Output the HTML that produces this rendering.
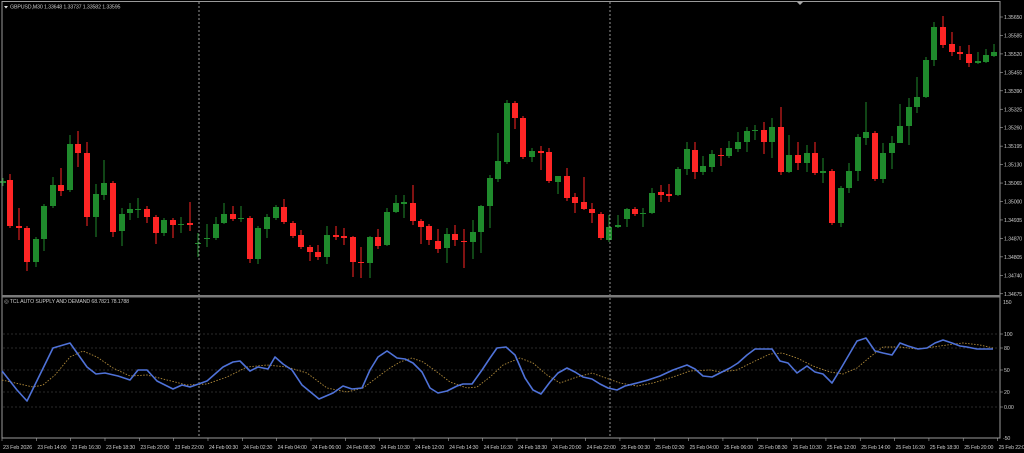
<!DOCTYPE html>
<html><head><meta charset="utf-8"><style>
html,body{margin:0;padding:0;background:#000;width:1024px;height:453px;overflow:hidden}
svg{display:block}
text{font-family:"Liberation Sans",sans-serif;font-size:5.3px;fill:#c8c8c8;letter-spacing:-0.15px}
</style></head><body>
<svg id="s" width="1024" height="453" xmlns="http://www.w3.org/2000/svg">
<rect width="1024" height="453" fill="#000"/>
<g id="grid"></g>
<g id="c"></g>
<line x1="199" y1="2" x2="199" y2="438" stroke="#bbb" stroke-width="0.8" stroke-dasharray="2,2"/>
<line x1="610" y1="2" x2="610" y2="438" stroke="#bbb" stroke-width="0.8" stroke-dasharray="2,2"/>
<rect x="2" y="1.5" width="998" height="436.5" fill="none" stroke="#9a9a9a" stroke-width="1"/>
<rect x="2" y="295" width="998" height="2.5" fill="#7a7a7a"/>
<polygon points="797,2 803,2 800,5" fill="#aaa"/>
<polygon points="4,6 8,6 6,8.5" fill="#ddd"/>
<text x="10" y="8.5">GBPUSD,M30  1.33648 1.33737 1.33582 1.33595</text>
<text x="4" y="303">◎ TCL AUTO SUPPLY AND DEMAND 68.7821 78.1788</text>
<polyline id="o" fill="none" stroke="#b08a3a" stroke-width="0.9" stroke-dasharray="1.5,1.5"/>
<polyline id="b" fill="none" stroke="#4f72d8" stroke-width="1.6" stroke-linejoin="round"/>
<g id="ax"></g>
</svg>
<script>
var NS="http://www.w3.org/2000/svg";
function el(p,t,a,txt){var e=document.createElementNS(NS,t);for(var k in a)e.setAttribute(k,a[k]);if(txt!=null)e.textContent=txt;document.getElementById(p).appendChild(e);return e;}
[[334,"100"],[348,"80"],[370,"50"],[392,"20"],[407,"0.00"]].forEach(function(g){
el("grid","line",{x1:3,y1:g[0],x2:999,y2:g[0],stroke:"#555","stroke-width":0.6,"stroke-dasharray":"2,2"});
el("ax","line",{x1:1000,y1:g[0],x2:1003,y2:g[0],stroke:"#aaa","stroke-width":0.6});
el("ax","text",{x:1004,y:g[0]+2},g[1]);});
el("ax","text",{x:1003,y:304},"150");el("ax","text",{x:1003,y:440},"-50");
var pl=["1.35650","1.35585","1.35520","1.35455","1.35390","1.35325","1.35260","1.35195","1.35130","1.35065","1.35000","1.34935","1.34870","1.34805","1.34740","1.34675"];
pl.forEach(function(t,i){var y=17+i*18.45;el("ax","line",{x1:1000,y1:y,x2:1003,y2:y,stroke:"#aaa","stroke-width":0.6});el("ax","text",{x:1004,y:y+2},t);});
var tl=["23 Feb 2026","23 Feb 14:00","23 Feb 16:30","23 Feb 18:30","23 Feb 20:00","23 Feb 22:00","24 Feb 00:30","24 Feb 02:30","24 Feb 04:00","24 Feb 06:00","24 Feb 08:30","24 Feb 10:30","24 Feb 12:00","24 Feb 14:30","24 Feb 16:30","24 Feb 18:30","24 Feb 20:00","24 Feb 22:00","25 Feb 00:30","25 Feb 02:30","25 Feb 04:00","25 Feb 06:00","25 Feb 08:30","25 Feb 10:30","25 Feb 12:00","25 Feb 14:00","25 Feb 16:30","25 Feb 18:30","25 Feb 20:00","25 Feb 22:00"];
tl.forEach(function(t,i){var x=2+i*34.33;el("ax","line",{x1:x,y1:438,x2:x,y2:441,stroke:"#aaa","stroke-width":0.6});el("ax","text",{x:x+1,y:449,textLength:29,lengthAdjust:"spacingAndGlyphs"},t);});
var C=[[3,181,183,178,186,'g'],[10,180,226,174,228,'r'],[19,226,228,208,240,'r'],[27,228,262,226,271,'r'],[36,239,262,237,267,'g'],[44,206,239,204,251,'g'],[53,185,206,177,208,'g'],[61,185,191,168,196,'r'],[70,144,190,135,192,'g'],[78,144,153,131,167,'r'],[87,153,217,142,226,'r'],[96,194,217,184,237,'g'],[104,183,195,160,200,'g'],[113,183,232,181,237,'r'],[122,214,231,208,246,'g'],[130,209,213,203,220,'g'],[138,209,210,198,218,'g'],[147,209,217,206,223,'r'],[156,217,233,215,244,'r'],[164,220,233,218,236,'g'],[173,220,225,218,238,'r'],[181,224,225,217,233,'g'],[190,223,225,202,231,'r'],[198,243,244,233,257,'g'],[207,238,239,224,247,'g'],[216,224,238,217,240,'g'],[224,214,223,203,224,'g'],[233,214,219,206,221,'r'],[241,218,219,206,222,'g'],[250,218,259,216,263,'r'],[258,228,259,226,264,'g'],[267,217,229,214,238,'g'],[276,207,218,205,220,'g'],[284,207,222,199,224,'r'],[293,223,236,221,238,'r'],[301,235,247,230,249,'r'],[310,247,252,245,261,'r'],[318,252,257,245,260,'r'],[327,235,257,226,264,'g'],[336,235,237,226,240,'r'],[344,236,238,228,245,'r'],[353,237,262,236,277,'r'],[361,262,263,247,278,'r'],[370,237,263,236,278,'g'],[378,237,246,229,249,'r'],[387,212,245,208,246,'g'],[396,203,212,195,213,'g'],[404,202,204,195,218,'g'],[413,203,221,185,225,'r'],[421,221,227,219,244,'r'],[429,226,240,224,245,'r'],[438,241,249,229,253,'r'],[447,234,248,228,263,'g'],[455,234,240,225,246,'r'],[464,241,242,229,268,'r'],[473,232,242,220,259,'g'],[481,206,232,205,253,'g'],[490,178,206,175,228,'g'],[498,161,179,133,182,'g'],[507,103,162,100,164,'g'],[515,103,118,101,129,'r'],[523,118,157,116,159,'r'],[532,151,157,148,162,'g'],[541,151,153,146,170,'r'],[549,152,181,148,183,'r'],[558,176,182,176,194,'g'],[567,176,198,168,201,'r'],[575,197,203,193,213,'r'],[584,202,209,177,210,'r'],[592,209,213,203,223,'r'],[601,214,238,212,240,'r'],[609,227,240,215,242,'g'],[618,225,227,215,228,'g'],[627,209,219,208,227,'g'],[635,209,214,207,216,'r'],[643,213,214,208,227,'g'],[652,193,213,188,214,'g'],[661,192,195,185,202,'r'],[669,194,196,184,202,'r'],[678,169,195,167,196,'g'],[687,149,169,142,175,'g'],[695,150,172,142,179,'r'],[703,166,172,156,175,'g'],[712,154,167,150,172,'g'],[721,155,156,148,166,'r'],[729,148,156,141,158,'g'],[738,142,149,132,152,'g'],[747,131,142,127,152,'g'],[755,130,131,125,140,'g'],[764,130,142,122,154,'r'],[772,127,142,118,158,'g'],[781,127,172,107,175,'r'],[789,155,172,135,173,'g'],[798,155,163,142,170,'r'],[807,153,163,145,172,'g'],[815,153,173,142,175,'r'],[823,171,173,158,183,'g'],[832,171,223,169,225,'r'],[841,188,223,186,227,'g'],[849,171,188,163,193,'g'],[858,137,171,134,181,'g'],[866,132,138,102,145,'g'],[875,133,179,131,181,'r'],[883,153,179,143,183,'g'],[892,143,153,136,169,'g'],[900,126,143,104,143,'g'],[909,107,126,98,145,'g'],[917,97,107,77,113,'g'],[926,60,97,57,98,'g'],[934,27,60,22,66,'g'],[943,27,45,16,48,'r'],[952,44,52,32,56,'r'],[960,52,54,46,60,'r'],[969,54,63,45,67,'r'],[978,61,63,52,64,'g'],[986,55,62,49,63,'g'],[994,52,56,44,57,'g']];
C.forEach(function(c){var col=c[5]=='g'?'#1f8a2c':'#ff2525';
el("c","line",{x1:c[0],y1:c[3],x2:c[0],y2:c[4],stroke:col,"stroke-width":1});
var h=Math.max(1,c[2]-c[1]);el("c","rect",{x:c[0]-3,y:c[1],width:6,height:h,fill:col});});
var B="2,371 17,390 27,401 53,348 70,343 87,367 96,374 105,373 118,376 130,380 138,370 147,370 157,381 173,389 182,385 190,387 207,381 223,367 233,362 240,361 250,371 258,367 268,369 275,357 283,364 292,370 302,385 319,399 333,393 343,386 352,389 362,388 370,370 378,357 387,351 390,353 397,358 405,359 413,363 422,372 430,388 438,393 447,391 457,386 463,384 472,384 482,370 490,358 497,348 506,347 515,355 525,378 533,390 541,394 550,382 558,373 567,368 575,372 583,377 592,379 600,384 608,388 617,390 625,386 637,383 648,380 660,376 673,370 687,365 695,369 703,376 712,377 720,373 730,368 738,363 747,355 755,349 772,349 780,361 788,363 797,373 807,366 815,372 823,374 832,383 840,370 857,341 866,338 875,351 883,353 892,355 900,343 908,346 918,349 927,348 935,343 943,340 952,343 960,346 967,347 977,349 993,349";
var O="2,380 33,387 43,385 55,375 70,357 83,351 97,357 113,368 130,376 147,375 167,380 187,385 207,384 227,377 247,367 267,365 287,367 307,373 327,388 347,392 363,388 383,373 390,368 400,362 412,358 423,362 437,372 450,382 467,388 477,387 490,377 503,365 520,358 533,363 547,375 560,383 577,377 592,373 603,377 620,383 637,386 653,383 673,377 690,371 710,370 720,372 737,370 753,362 770,354 782,353 797,358 813,366 830,372 843,374 857,368 870,357 883,347 900,347 917,349 933,347 947,345 963,343 980,345 993,348";
document.getElementById("b").setAttribute("points",B);
document.getElementById("o").setAttribute("points",O);
</script>
</body></html>
